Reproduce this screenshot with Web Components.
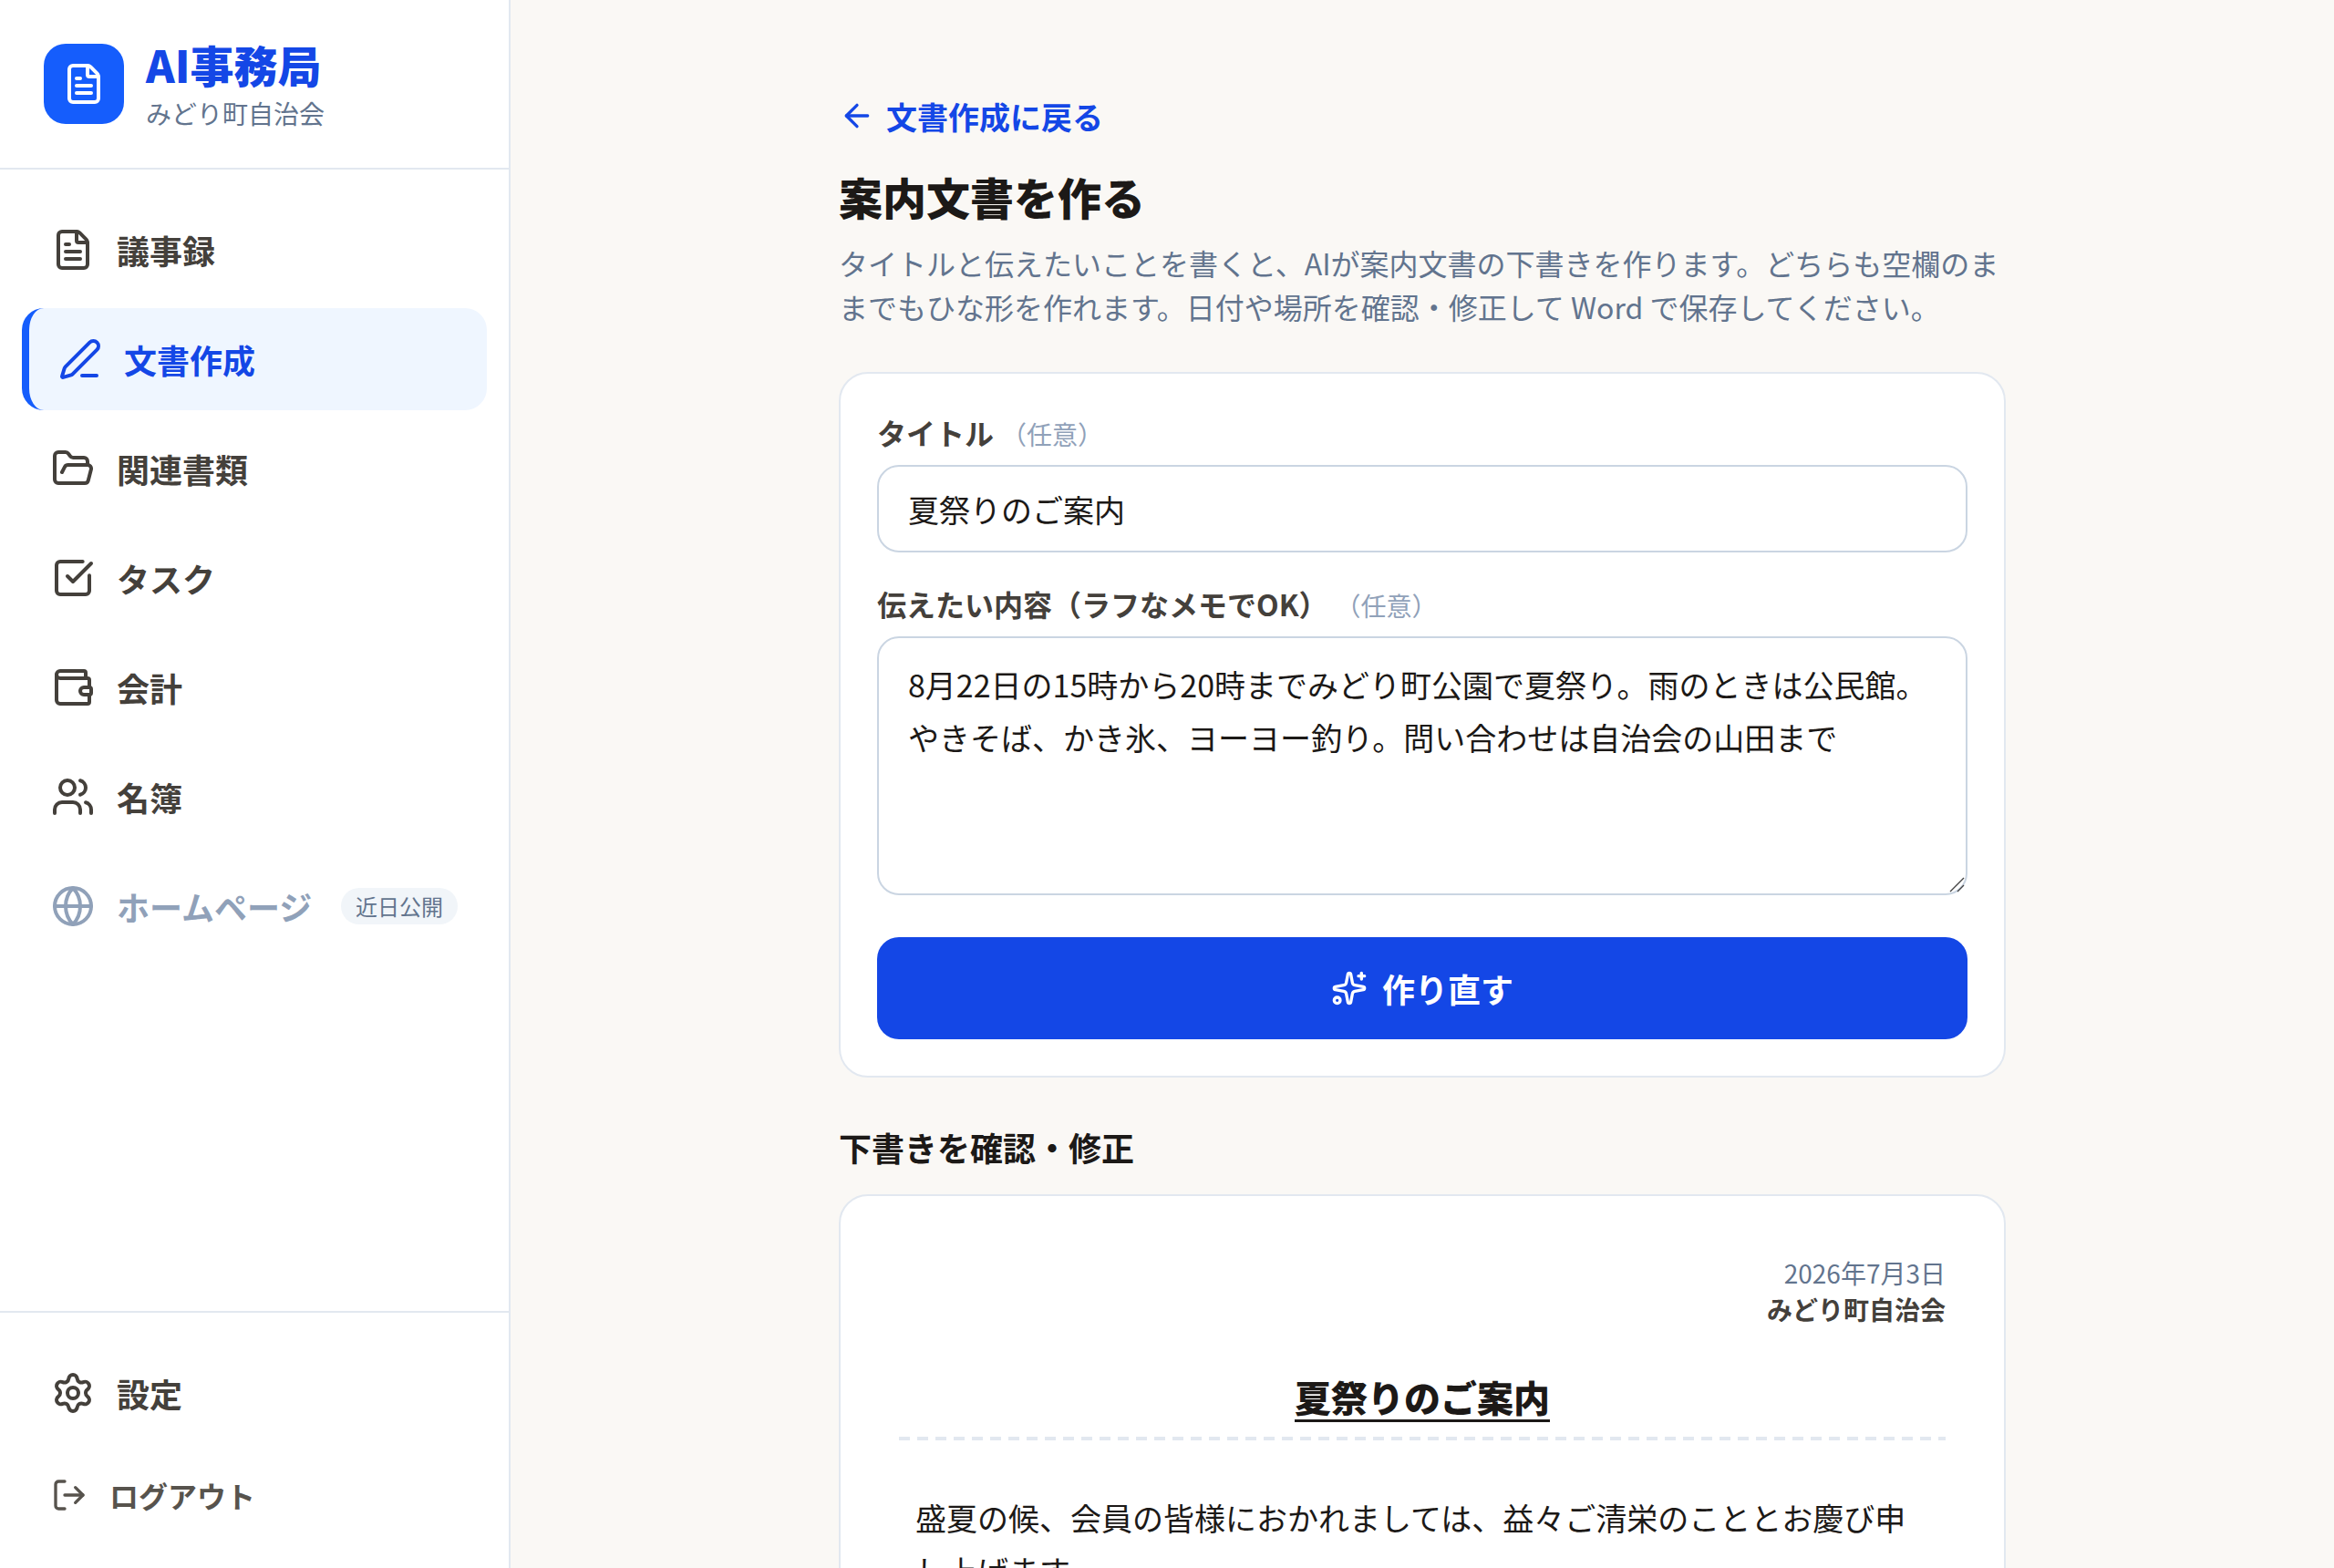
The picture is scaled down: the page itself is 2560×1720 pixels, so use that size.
<!DOCTYPE html>
<html lang="ja">
<head>
<meta charset="utf-8">
<meta name="viewport" content="width=device-width, initial-scale=1">
<title>案内文書を作る | AI事務局</title>
<style>
    body {
        margin: 0;
        font-family: "Noto Sans CJK JP", "Noto Sans", sans-serif;
        font-size: 34px;
        color: #1c1917;
        background: #faf8f5;
        --primary: #1447e6;
        --primary-bright: #155dfc;
        --primary-soft: #eff6ff;
        --line: #e2e8f0;
        --line-strong: #cad5e2;
        --muted: #62748e;
        --faint: #90a1b9;
        --soft: #f1f5f9;
        --text: #44403b;
        --text-light: #57534d;
    }
</style>
</head>
<body>

<app-shell>
    <app-sidebar slot="sidebar" name="AI事務局" org="みどり町自治会">
        <nav-item icon="file-text" href="#minutes">議事録</nav-item>
        <nav-item icon="pen-line" href="#documents" active>文書作成</nav-item>
        <nav-item icon="folder-open" href="#files">関連書類</nav-item>
        <nav-item icon="square-check" href="#tasks">タスク</nav-item>
        <nav-item icon="wallet" href="#accounting">会計</nav-item>
        <nav-item icon="users" href="#members">名簿</nav-item>
        <nav-item icon="globe" badge="近日公開">ホームページ</nav-item>
        <nav-item slot="footer" icon="settings" href="#settings">設定</nav-item>
        <nav-item slot="footer" icon="log-out" action>ログアウト</nav-item>
    </app-sidebar>

    <page-header back="文書作成に戻る" heading="案内文書を作る">タイトルと伝えたいことを書くと、AIが案内文書の下書きを作ります。どちらも空欄のままでもひな形を作れます。日付や場所を確認・修正して Word で保存してください。</page-header>

    <notice-form></notice-form>

    <draft-preview heading="下書きを確認・修正" date="2026年7月3日" org="みどり町自治会"></draft-preview>
</app-shell>

<script>
const ICONS = {
    'file-text': '<path d="M6 22a2 2 0 0 1-2-2V4a2 2 0 0 1 2-2h8a2.4 2.4 0 0 1 1.704.706l3.588 3.588A2.4 2.4 0 0 1 20 8v12a2 2 0 0 1-2 2z"/><path d="M14 2v5a1 1 0 0 0 1 1h5"/><path d="M10 9H8"/><path d="M16 13H8"/><path d="M16 17H8"/>',
    'pen-line': '<path d="M13 21h8"/><path d="M21.174 6.812a1 1 0 0 0-3.986-3.987L3.842 16.174a2 2 0 0 0-.5.83l-1.321 4.352a.5.5 0 0 0 .623.622l4.353-1.32a2 2 0 0 0 .83-.497z"/>',
    'folder-open': '<path d="m6 14 1.5-2.9A2 2 0 0 1 9.24 10H20a2 2 0 0 1 1.94 2.5l-1.54 6a2 2 0 0 1-1.95 1.5H4a2 2 0 0 1-2-2V5a2 2 0 0 1 2-2h3.9a2 2 0 0 1 1.69.9l.81 1.2a2 2 0 0 0 1.67.9H18a2 2 0 0 1 2 2v2"/>',
    'square-check': '<path d="M21 10.656V19a2 2 0 0 1-2 2H5a2 2 0 0 1-2-2V5a2 2 0 0 1 2-2h12.344"/><path d="m9 11 3 3L22 4"/>',
    'wallet': '<path d="M19 7V4a1 1 0 0 0-1-1H5a2 2 0 0 0 0 4h15a1 1 0 0 1 1 1v4h-3a2 2 0 0 0 0 4h3a1 1 0 0 0 1-1v-2a1 1 0 0 0-1-1"/><path d="M3 5v14a2 2 0 0 0 2 2h15a1 1 0 0 0 1-1v-4"/>',
    'users': '<path d="M16 21v-2a4 4 0 0 0-4-4H6a4 4 0 0 0-4 4v2"/><path d="M16 3.128a4 4 0 0 1 0 7.744"/><path d="M22 21v-2a4 4 0 0 0-3-3.87"/><circle cx="9" cy="7" r="4"/>',
    'globe': '<circle cx="12" cy="12" r="10"/><path d="M12 2a14.5 14.5 0 0 0 0 20 14.5 14.5 0 0 0 0-20"/><path d="M2 12h20"/>',
    'settings': '<path d="M9.671 4.136a2.34 2.34 0 0 1 4.659 0 2.34 2.34 0 0 0 3.319 1.915 2.34 2.34 0 0 1 2.33 4.033 2.34 2.34 0 0 0 0 3.831 2.34 2.34 0 0 1-2.33 4.033 2.34 2.34 0 0 0-3.319 1.915 2.34 2.34 0 0 1-4.659 0 2.34 2.34 0 0 0-3.32-1.915 2.34 2.34 0 0 1-2.33-4.033 2.34 2.34 0 0 0 0-3.831A2.34 2.34 0 0 1 6.35 6.051a2.34 2.34 0 0 0 3.319-1.915"/><circle cx="12" cy="12" r="3"/>',
    'log-out': '<path d="m16 17 5-5-5-5"/><path d="M21 12H9"/><path d="M9 21H5a2 2 0 0 1-2-2V5a2 2 0 0 1 2-2h4"/>',
    'arrow-left': '<path d="m12 19-7-7 7-7"/><path d="M19 12H5"/>',
    'sparkles': '<path d="M11.017 2.814a1 1 0 0 1 1.966 0l1.051 5.558a2 2 0 0 0 1.594 1.594l5.558 1.051a1 1 0 0 1 0 1.966l-5.558 1.051a2 2 0 0 0-1.594 1.594l-1.051 5.558a1 1 0 0 1-1.966 0l-1.051-5.558a2 2 0 0 0-1.594-1.594l-5.558-1.051a1 1 0 0 1 0-1.966l5.558-1.051a2 2 0 0 0 1.594-1.594z"/><path d="M20 2v4"/><path d="M22 4h-4"/><circle cx="4" cy="20" r="2"/>'
};

const RESET = `
    * {
        padding: 0;
        margin: 0;
        box-sizing: border-box;
    }
    input, textarea, button {
        font: inherit;
        color: inherit;
    }
`;

// shared by every element below: fills an open shadow root
class BaseElement extends HTMLElement {

    render(html) {
        const template = document.createElement('template');
        template.innerHTML = html;
        this.attachShadow({mode: 'open'});
        this.shadowRoot.appendChild(template.content.cloneNode(true));
    }

}

class AppIcon extends BaseElement {

    constructor() {
        super();
        this.render(`
            <style>
                :host {
                    display: block;
                    flex: none;
                    width: 48px;
                    height: 48px;
                }
                :host([small]) {
                    width: 40px;
                    height: 40px;
                }
                svg {
                    display: block;
                    width: 100%;
                    height: 100%;
                }
            </style>
            <svg viewBox="0 0 24 24" fill="none" stroke="currentColor" stroke-width="2" stroke-linecap="round" stroke-linejoin="round" aria-hidden="true"></svg>
        `);
    }

    static get observedAttributes() { return ['name']; }
    attributeChangedCallback(name, oldValue, newValue) {
        this.shadowRoot.querySelector('svg').innerHTML = ICONS[newValue] || '';
    }

}

class AppShell extends BaseElement {

    constructor() {
        super();
        this.render(`
            <style>
                ${RESET}
                :host {
                    display: grid;
                    grid-template-columns: 560px 1fr;
                    height: 100vh;
                }
                main {
                    overflow-y: auto;
                    scrollbar-width: none;
                    padding: 96px 48px;
                }
                #content {
                    max-width: 1280px;
                    margin: 0 auto;
                    display: flex;
                    flex-direction: column;
                    gap: 48px;
                }
            </style>
            <slot name="sidebar"></slot>
            <main>
                <div id="content"><slot></slot></div>
            </main>
        `);
    }

}

class AppSidebar extends BaseElement {

    connectedCallback() {
        this.render(`
            <style>
                ${RESET}
                :host {
                    display: flex;
                    flex-direction: column;
                    background: #fff;
                    border-right: 2px solid var(--line);
                }
                header {
                    display: flex;
                    align-items: center;
                    gap: 24px;
                    padding: 38px 48px;
                    border-bottom: 2px solid var(--line);
                }
                #logo {
                    display: grid;
                    place-items: center;
                    width: 88px;
                    height: 88px;
                    border-radius: 24px;
                    color: #fff;
                    background: var(--primary-bright);
                }
                #name {
                    font-size: 48px;
                    line-height: 64px;
                    font-weight: 800;
                    color: var(--primary);
                }
                #org {
                    font-size: 28px;
                    line-height: 44px;
                    color: var(--muted);
                }
                nav, footer {
                    display: flex;
                    flex-direction: column;
                    gap: 8px;
                    padding: 32px 24px;
                }
                nav {
                    flex: 1;
                }
                footer {
                    border-top: 2px solid var(--line);
                }
            </style>
            <header>
                <div id="logo"><app-icon name="file-text"></app-icon></div>
                <div>
                    <p id="name">${this.getAttribute('name')}</p>
                    <p id="org">${this.getAttribute('org')}</p>
                </div>
            </header>
            <nav><slot></slot></nav>
            <footer><slot name="footer"></slot></footer>
        `);
    }

}

class NavItem extends BaseElement {

    connectedCallback() {
        const icon = this.getAttribute('icon');
        const badge = this.getAttribute('badge');
        const action = this.hasAttribute('action');
        const tag = action || badge ? 'button' : 'a';
        const attrs = tag === 'a' ? `href="${this.getAttribute('href')}"` : `type="button" ${badge ? 'disabled' : ''}`;

        this.render(`
            <style>
                ${RESET}
                :host {
                    display: block;
                }
                #item {
                    display: flex;
                    align-items: center;
                    gap: 24px;
                    width: 100%;
                    height: 112px;
                    padding: 0 32px;
                    border: 0;
                    border-radius: 24px;
                    background: none;
                    font-size: 36px;
                    line-height: 54px;
                    font-weight: 700;
                    text-align: left;
                    text-decoration: none;
                    white-space: nowrap;
                    color: var(--text);
                }
                #item:disabled {
                    color: var(--faint);
                }
                :host([active]) #item {
                    border-left: 8px solid var(--primary-bright);
                    background: var(--primary-soft);
                    color: var(--primary);
                }
                :host([action]) #item {
                    height: 96px;
                    font-size: 32px;
                    line-height: 48px;
                    color: var(--text-light);
                }
                #badge {
                    margin-left: auto;
                    padding: 4px 16px;
                    border-radius: 20px;
                    font-size: 24px;
                    line-height: 32px;
                    font-weight: 400;
                    color: var(--muted);
                    background: var(--soft);
                }
            </style>
            <${tag} id="item" ${attrs}>
                <app-icon name="${icon}" ${action ? 'small' : ''}></app-icon>
                <slot></slot>
                ${badge ? `<span id="badge">${badge}</span>` : ''}
            </${tag}>
        `);
    }

}

class PageHeader extends BaseElement {

    connectedCallback() {
        this.render(`
            <style>
                ${RESET}
                :host {
                    display: block;
                }
                a {
                    display: inline-flex;
                    align-items: center;
                    gap: 12px;
                    height: 62px;
                    vertical-align: top;
                    font-weight: 700;
                    text-decoration: none;
                    color: var(--primary);
                }
                h1 {
                    margin: 20px 0 12px;
                    font-size: 48px;
                    line-height: 74px;
                    font-weight: 800;
                }
                p {
                    font-size: 32px;
                    line-height: 48px;
                    color: var(--muted);
                }
            </style>
            <a href="#documents"><app-icon name="arrow-left" small></app-icon>${this.getAttribute('back')}</a>
            <h1>${this.getAttribute('heading')}</h1>
            <p><slot></slot></p>
        `);
    }

}

class PanelCard extends BaseElement {

    constructor() {
        super();
        this.render(`
            <style>
                :host {
                    display: block;
                }
                #card {
                    padding: 40px;
                    border: 2px solid var(--line);
                    border-radius: 32px;
                    background: #fff;
                }
                :host([roomy]) #card {
                    padding: 64px;
                }
            </style>
            <div id="card"><slot></slot></div>
        `);
    }

}

class NoticeForm extends BaseElement {

    constructor() {
        super();
        this.render(`
            <style>
                ${RESET}
                :host {
                    display: block;
                }
                form {
                    display: flex;
                    flex-direction: column;
                    gap: 32px;
                }
                label {
                    display: block;
                    margin-bottom: 12px;
                    font-size: 32px;
                    line-height: 48px;
                    font-weight: 700;
                    color: var(--text);
                }
                label span {
                    display: inline-block;
                    margin-left: 8px;
                    font-size: 28px;
                    line-height: 40px;
                    font-weight: 400;
                    color: var(--faint);
                }
                input, textarea {
                    display: block;
                    width: 100%;
                    border: 2px solid var(--line-strong);
                    border-radius: 24px;
                    outline: none;
                    background: #fff;
                    line-height: 58px;
                }
                input {
                    height: 96px;
                    padding: 0 32px;
                }
                textarea {
                    padding: 22px 32px 26px;
                    resize: none;
                }
                #memo {
                    position: relative;
                }
                #grip {
                    position: absolute;
                    right: 2px;
                    bottom: 2px;
                    width: 18px;
                    height: 18px;
                    pointer-events: none;
                }
                button {
                    display: flex;
                    align-items: center;
                    justify-content: center;
                    gap: 16px;
                    height: 112px;
                    margin-top: 14px;
                    border: 0;
                    border-radius: 24px;
                    font-size: 36px;
                    font-weight: 700;
                    color: #fff;
                    background: var(--primary);
                }
            </style>
            <panel-card>
                <form>
                    <div>
                        <label for="title">タイトル<span>（任意）</span></label>
                        <input id="title" type="text" value="夏祭りのご案内">
                    </div>
                    <div>
                        <label for="content">伝えたい内容（ラフなメモでOK）<span>（任意）</span></label>
                        <div id="memo">
                            <textarea id="content" rows="4">8月22日の15時から20時までみどり町公園で夏祭り。雨のときは公民館。やきそば、かき氷、ヨーヨー釣り。問い合わせは自治会の山田まで</textarea>
                            <svg id="grip" viewBox="0 0 18 18" stroke="#444" stroke-width="1.4" fill="none" aria-hidden="true"><path d="M1 16 16 1M9 16l7-7"/></svg>
                        </div>
                    </div>
                    <button type="button"><app-icon name="sparkles" small></app-icon>作り直す</button>
                </form>
            </panel-card>
        `);
    }

}

class DraftPreview extends BaseElement {

    connectedCallback() {
        this.render(`
            <style>
                ${RESET}
                :host {
                    display: block;
                }
                h2 {
                    margin-bottom: 24px;
                    font-size: 36px;
                    line-height: 56px;
                    font-weight: 700;
                }
                #meta {
                    font-size: 28px;
                    line-height: 40px;
                    text-align: right;
                    color: var(--muted);
                }
                #meta strong {
                    display: block;
                    font-weight: 700;
                    color: var(--text);
                }
                input, textarea {
                    display: block;
                    width: 100%;
                    border: 0;
                    outline: none;
                    background: none;
                }
                input {
                    height: 56px;
                    margin-top: 48px;
                    font-size: 40px;
                    line-height: 56px;
                    font-weight: 800;
                    text-align: center;
                    text-decoration: underline;
                    text-decoration-thickness: 4px;
                    text-underline-offset: 8px;
                }
                #rule {
                    height: 4px;
                    margin: 16px 0 32px;
                    background: repeating-linear-gradient(90deg, var(--line) 0 12px, transparent 12px 20px);
                }
                textarea {
                    padding: 24px 18px;
                    line-height: 58px;
                    resize: none;
                }
            </style>
            <h2>${this.getAttribute('heading')}</h2>
            <panel-card roomy>
                <p id="meta">${this.getAttribute('date')}<strong>${this.getAttribute('org')}</strong></p>
                <input type="text" aria-label="文書のタイトル" value="夏祭りのご案内">
                <div id="rule"></div>
                <textarea rows="8" aria-label="文書の本文">盛夏の候、会員の皆様におかれましては、益々ご清栄のこととお慶び申し上げます。</textarea>
            </panel-card>
        `);
    }

}

customElements.define('app-icon', AppIcon);
customElements.define('app-shell', AppShell);
customElements.define('app-sidebar', AppSidebar);
customElements.define('nav-item', NavItem);
customElements.define('page-header', PageHeader);
customElements.define('panel-card', PanelCard);
customElements.define('notice-form', NoticeForm);
customElements.define('draft-preview', DraftPreview);
</script>
</body>
</html>
